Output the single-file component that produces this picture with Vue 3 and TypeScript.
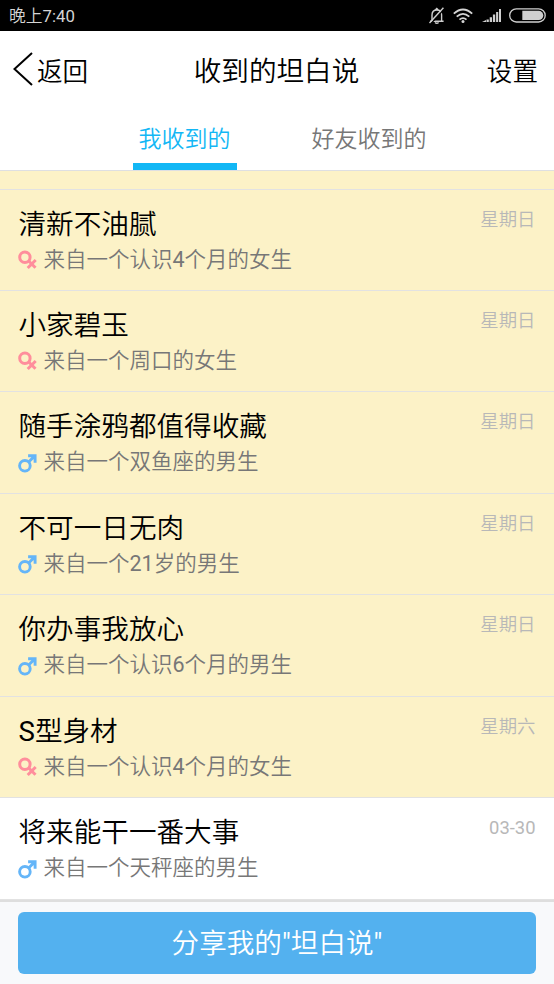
<script setup lang="ts">
type Gender = 'female' | 'male'

interface Message {
  title: string
  source: string
  gender: Gender
  time: string
  unread: boolean
}

const messages: Message[] = [
  { title: '清新不油腻', source: '来自一个认识4个月的女生', gender: 'female', time: '星期日', unread: true },
  { title: '小家碧玉', source: '来自一个周口的女生', gender: 'female', time: '星期日', unread: true },
  { title: '随手涂鸦都值得收藏', source: '来自一个双鱼座的男生', gender: 'male', time: '星期日', unread: true },
  { title: '不可一日无肉', source: '来自一个21岁的男生', gender: 'male', time: '星期日', unread: true },
  { title: '你办事我放心', source: '来自一个认识6个月的男生', gender: 'male', time: '星期日', unread: true },
  { title: 'S型身材', source: '来自一个认识4个月的女生', gender: 'female', time: '星期六', unread: true },
  { title: '将来能干一番大事', source: '来自一个天秤座的男生', gender: 'male', time: '03-30', unread: false },
]

// Splits a label into Latin and Chinese runs, which carry different weights.
function runs(text: string): { text: string; latin: boolean }[] {
  return (text.match(/[\x20-\x7e]+|[^\x20-\x7e]+/g) ?? []).map((part) => ({
    text: part,
    latin: part.charCodeAt(0) < 0x7f,
  }))
}
</script>

<template>
  <div class="screen">
    <div class="status">
      <span class="clock">晚上<span class="latin">7:40</span></span>
      <div class="indicators">
        <svg class="bell" width="18" height="18" viewBox="0 0 18 18" fill="none" stroke="#cfcfcf" stroke-width="1.4">
          <path d="M2 14.200h13.600M4 14V8C4 5 6 3 8.800 3s4.800 2 4.800 5v6M7.500 2.700 8.800 1.500l1.300 1.200M7 15.400q1.800 1.700 3.600 0" />
          <path d="M3 16.400 16.500 1.800" stroke="#000" stroke-width="1.400" />
          <path d="M1.500 16 15.400.8" />
        </svg>
        <svg class="wifi" width="20" height="16" viewBox="0 0 20 16" fill="none" stroke="#d5d5d5" stroke-width="1.8">
          <path d="M.8 5.600Q10-2.600 19.200 5.600M3.700 8.700q6.300-5.600 12.600 0M6.500 11.600q3.500-3 7 0" />
          <circle cx="10" cy="13.600" r="1.500" fill="#d5d5d5" stroke="none" />
        </svg>
        <svg class="signal" width="20" height="15" viewBox="0 0 20 15" fill="#cfcfcf">
          <path d="M0 14 4 12v2zM4.500 11.500h2.300V14H4.500zM7.700 9.300H10V14H7.700zM10.900 6.500h2.300V14h-2.300zM14.100 3.900h2.100V14h-2.100zM17 1h2v13h-2z" />
        </svg>
        <svg class="battery" width="38" height="15" viewBox="0 0 38 15">
          <rect x=".7" y=".8" width="35.500" height="13.200" rx="6.600" fill="none" stroke="#cfcfcf" stroke-width="1.300" />
          <path d="M13.300 2.800h16.400a4.600 4.600 0 0 1 0 9.200H13.300z" fill="#cfcfcf" />
        </svg>
      </div>
    </div>

    <header class="nav">
      <button class="back">
        <svg width="20" height="34" viewBox="0 0 20 34" fill="none" stroke="#000" stroke-width="2">
          <path d="M19 1 1.500 17 19 33" />
        </svg>
        <span>返回</span>
      </button>
      <h1>收到的坦白说</h1>
      <button class="settings">设置</button>
    </header>

    <nav class="tabs">
      <button class="tab active">我收到的</button>
      <button class="tab">好友收到的</button>
    </nav>

    <main class="list">
      <div class="previous"></div>
      <article v-for="m in messages" :key="m.title" class="row" :class="{ unread: m.unread }">
        <div class="body">
          <h2><span v-for="(r, i) in runs(m.title)" :key="i" :class="{ latin: r.latin }">{{ r.text }}</span></h2>
          <p>
            <svg v-if="m.gender === 'female'" width="20" height="20" viewBox="0 0 20 20" fill="none" stroke="#ff8e9c" stroke-width="3">
              <circle cx="6.900" cy="7.200" r="5.200" />
              <path d="m10.700 11 6.800 6.800M17.700 10l-8 8" />
            </svg>
            <svg v-else width="20" height="20" viewBox="0 0 20 20" fill="none" stroke="#64b5f8" stroke-width="2.900">
              <circle cx="6.900" cy="12.800" r="5.300" />
              <path d="m10.900 8.800 6-6M10.100 2.700h7v7" />
            </svg>
            <span><span v-for="(r, i) in runs(m.source)" :key="i" :class="{ latin: r.latin }">{{ r.text }}</span></span>
          </p>
        </div>
        <time><span v-for="(r, i) in runs(m.time)" :key="i" :class="{ latin: r.latin }">{{ r.text }}</span></time>
      </article>
    </main>

    <footer class="footer">
      <button class="share">分享我的<span class="latin">"</span>坦白说<span class="latin">"</span></button>
    </footer>
  </div>
</template>

<style>
body {
  margin: 0;
  background: #fff;
}
</style>

<style scoped>
.screen {
  display: flex;
  flex-direction: column;
  width: 554px;
  height: 984px;
  overflow: hidden;
  background: #fff;
  color: #000;
  font-family: Roboto, "Noto Sans CJK SC", sans-serif;
  font-weight: 350;
}
.latin {
  font-weight: 400;
}
button {
  padding: 0;
  border: 0;
  background: none;
  color: inherit;
  font: inherit;
}
h1, h2, p {
  margin: 0;
  font-weight: inherit;
}
svg {
  display: block;
  flex: none;
}
.status {
  display: flex;
  justify-content: space-between;
  flex: none;
  height: 31px;
  padding: 0 7px 0 9px;
  background: #000;
  color: #d5d5d5;
}
.clock {
  font-size: 16.800px;
  line-height: 32px;
}
.indicators {
  display: flex;
  align-items: center;
}
.wifi {
  margin-left: 7px;
}
.signal {
  margin-left: 9px;
}
.battery {
  margin-left: 7px;
}
.nav {
  display: grid;
  grid-template-columns: 1fr auto 1fr;
  align-items: center;
  flex: none;
  box-sizing: border-box;
  height: 78px;
  padding: 0 16px 2px 13px;
  font-size: 25.600px;
}
.back {
  display: flex;
  align-items: center;
  gap: 4px;
}
.nav h1 {
  padding-left: 2px;
  font-size: 27.600px;
}
.settings {
  justify-self: end;
}
.tabs {
  display: flex;
  justify-content: center;
  gap: 69px;
  flex: none;
  height: 61px;
  padding-left: 11px;
  border-bottom: 1px solid #dedfe2;
  font-size: 23px;
}
.tab {
  box-sizing: border-box;
  height: 61px;
  padding: 1px 6px 0;
  border-bottom: 7px solid transparent;
  color: #777;
}
.tab.active {
  border-color: #12b7f5;
  color: #12b7f5;
}
.list {
  flex: none;
}
.previous {
  height: 17.500px;
  background: #fcf2c7;
  border-bottom: 1px solid #e2e2e2;
}
.row {
  display: flex;
  justify-content: space-between;
  box-sizing: border-box;
  height: 101.450px;
  padding: 16px 18.500px 0 18.500px;
  border-bottom: 1px solid #e2e2e2;
}
.row.unread {
  background: #fcf2c7;
}
h2 {
  font-size: 27.600px;
  line-height: 38px;
}
p {
  display: flex;
  align-items: center;
  gap: 6px;
  margin-left: -1px;
  color: #777;
  font-size: 21.500px;
  line-height: 32.800px;
}
time {
  color: #b8b8b8;
  font-size: 18.400px;
  line-height: 28.900px;
}
.footer {
  flex: 1;
  padding: 10.300px 18px 0;
  border-top: 2px solid #dedede;
  background: #f8f9fb;
}
.share {
  display: block;
  width: 100%;
  height: 62px;
  padding-bottom: 3px;
  border-radius: 6px;
  background: #53b1ef;
  color: #fff;
  font-size: 27.600px;
}
</style>
